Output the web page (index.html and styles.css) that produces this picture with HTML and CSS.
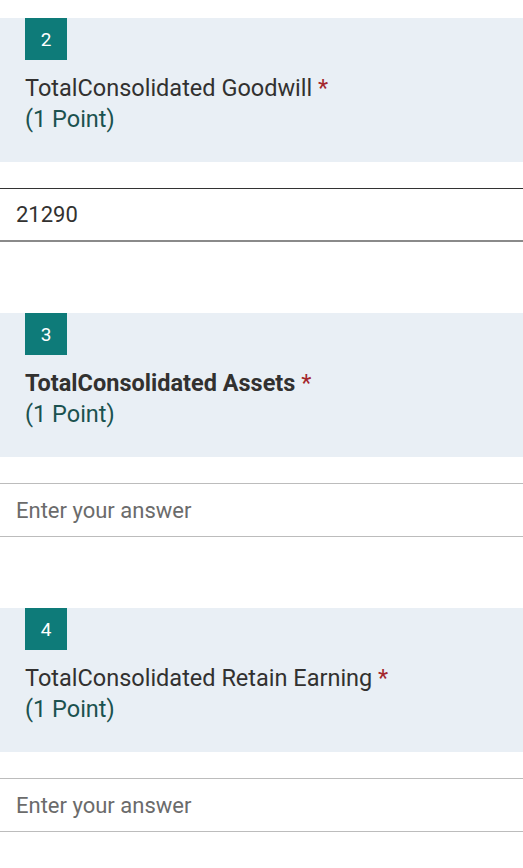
FILE: index.html
```html
<!DOCTYPE html>
<html lang="en">
<head>
  <meta charset="UTF-8">
  <meta name="viewport" content="width=device-width, initial-scale=1.0">
  <title>Quiz</title>
  <link rel="stylesheet" href="styles.css">
</head>
<body>
  <form class="quiz">
    <div class="question">
      <div class="prompt">
        <div class="badge">2</div>
        <div class="title">TotalConsolidated Goodwill <span class="required">*</span></div>
        <div class="points">(1 Point)</div>
      </div>
      <input type="text" class="answer answer-filled" value="21290" placeholder="Enter your answer">
    </div>

    <div class="question">
      <div class="prompt">
        <div class="badge">3</div>
        <div class="title title-bold">TotalConsolidated Assets <span class="required">*</span></div>
        <div class="points">(1 Point)</div>
      </div>
      <input type="text" class="answer" placeholder="Enter your answer">
    </div>

    <div class="question">
      <div class="prompt">
        <div class="badge">4</div>
        <div class="title">TotalConsolidated Retain Earning <span class="required">*</span></div>
        <div class="points">(1 Point)</div>
      </div>
      <input type="text" class="answer" placeholder="Enter your answer">
    </div>
  </form>
</body>
</html>
```

FILE: styles.css
```css
body {
  margin: 0;
  padding: 0;
  background-color: #fff;
  font-family: Roboto, "Noto Sans", sans-serif;
  color: #323130;
}

.quiz {
  padding-top: 18px;
}

.question {
  margin-bottom: 71px;
}

.prompt {
  background-color: #e9eff5;
  padding: 0 25px 27px;
}

.badge {
  width: 42px;
  height: 42px;
  display: flex;
  justify-content: center;
  align-items: center;
  background-color: #0e7b79;
  color: #fff;
  font-size: 19px;
}

.title {
  margin-top: 13px;
  font-size: 23.5px;
  line-height: 31px;
  color: #323130;
}

.title-bold {
  font-weight: bold;
}

.required {
  color: #a4262c;
  font-weight: normal;
}

.points {
  font-size: 23.5px;
  line-height: 31px;
  color: #1b524f;
}

.answer {
  display: block;
  box-sizing: border-box;
  width: 100%;
  height: 54px;
  margin: 26px 0 0;
  padding: 0 16px;
  border: none;
  border-top: 1px solid #bcbcbc;
  border-bottom: 1px solid #bcbcbc;
  background: #fff;
  font-family: Roboto, "Noto Sans", sans-serif;
  font-size: 22px;
  color: #323130;
  outline: none;
}

.answer::placeholder {
  color: #6b6b6b;
}

.answer-filled {
  border-top: 1px solid #333;
  border-bottom: 2px solid #8a8a8a;
}
```
